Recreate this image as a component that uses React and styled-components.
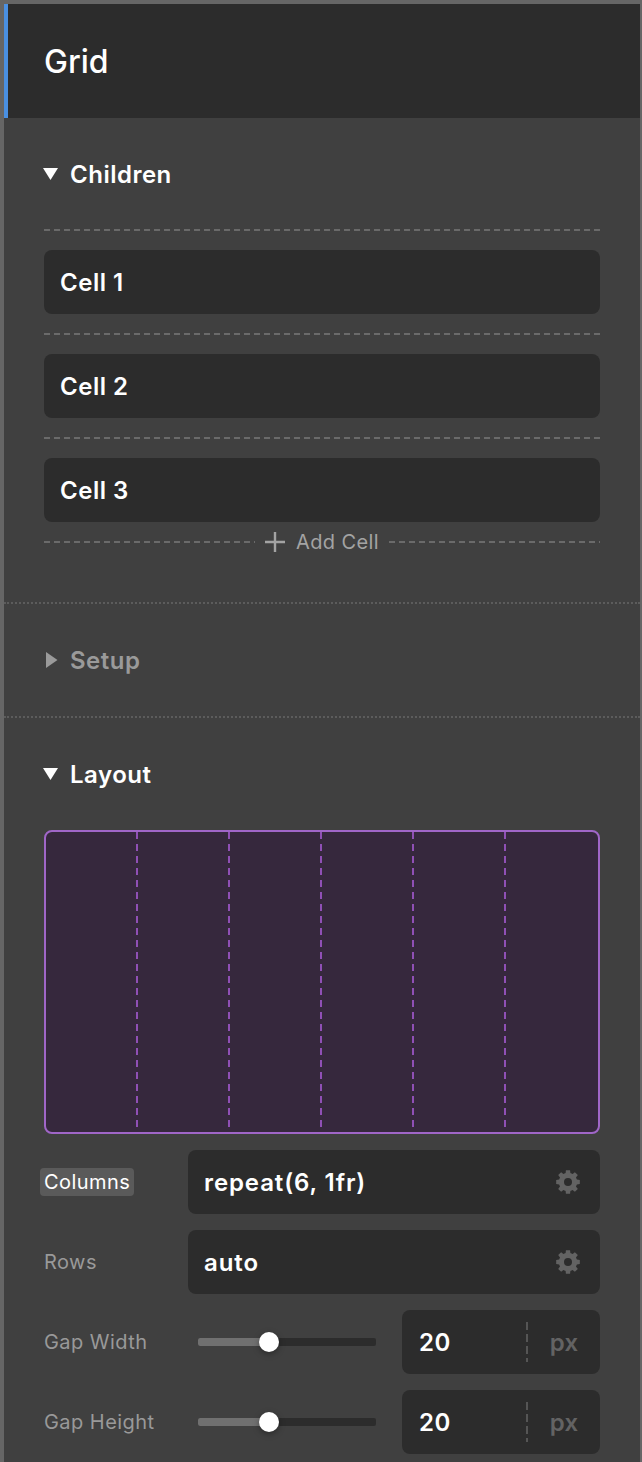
import React from "react";
import styled, { createGlobalStyle } from "styled-components";

const Global = createGlobalStyle`
  html, body { margin: 0; padding: 0; background: #666; }
  body { font-family: Inter, "Liberation Sans", sans-serif; -webkit-font-smoothing: antialiased; }
  * { box-sizing: border-box; }
`;
const Page = styled.div`
  width: 642px; height: 1462px; overflow: hidden; background: #666;
  padding: 4px 2px 0 4px;
`;
const Panel = styled.div`
  background: #404040; height: 1458px;
`;
const Header = styled.div`
  height: 114px; background: #2c2c2c; border-left: 4px solid #4a90e2;
  padding-left: 36px; display: flex; align-items: center;
  color: #fff; font-size: 32px; font-weight: 500;
`;
const Section = styled.section`
  padding: 0 40px ${p => p.$pb || 0}px;
  border-bottom: ${p => (p.$divider ? "2px dotted #5c5c5c" : "none")};
`;
const SectionHead = styled.div`
  height: 40px; margin: 36px 0 ${p => p.$mb}px; display: flex; align-items: center;
  font-size: 24px; font-weight: 600; letter-spacing: 0.5px;
  color: ${p => (p.$muted ? "#9a9a9a" : "#fff")};
`;
const CaretBox = styled.div`
  width: 26px; flex: none; display: flex; align-items: center;
`;
const Caret = styled.svg`
  display: block; fill: currentColor;
`;
const DashLine = styled.div`
  height: 2px; flex: 1;
  background: repeating-linear-gradient(90deg, #6a6a6a 0 6px, transparent 6px 10px);
`;
const Slot = styled.div`
  height: 40px; display: flex; align-items: center;
`;
const Cell = styled.div`
  height: 64px; background: #2c2c2c; border-radius: 8px; padding-left: 16px;
  display: flex; align-items: center;
  color: #fff; font-size: 24px; font-weight: 600; letter-spacing: 0.5px;
`;
const AddRow = styled.div`
  height: 40px; display: flex; align-items: center; color: #a3a3a3;
  font-size: 20px; letter-spacing: 0.4px;
`;
const AddLabel = styled.div`
  display: flex; align-items: center; gap: 11px; padding: 0 10px;
`;
const Preview = styled.div`
  height: 304px; background: #36283d; border: 2px solid #a066c8; border-radius: 8px;
  display: grid; grid-template-columns: repeat(6, 1fr); overflow: hidden;
`;
const Column = styled.div`
  background-image: ${p => p.$last ? "none" : "repeating-linear-gradient(180deg, #8f50b5 0 7px, transparent 7px 12px)"};
  background-size: 2px 100%; background-repeat: no-repeat; background-position: right top;
`;
const Rows = styled.div`
  display: flex; flex-direction: column; gap: 16px; margin-top: 16px;
`;
const Row = styled.div`
  height: 64px; display: flex; align-items: center;
`;
const Label = styled.div`
  width: 144px; flex: none; font-size: 20px; letter-spacing: 0.45px;
  color: ${p => (p.$active ? "#fff" : "#999")};
  span {
    display: inline-block; height: 28px; line-height: 29px; border-radius: 4px;
    ${p => p.$active ? "background:#5a5a5a; padding:0 4px; margin-left:-4px;" : ""}
  }
`;
const Field = styled.div`
  flex: 1; height: 64px; background: #2c2c2c; border-radius: 8px; padding: 0 20px 0 16px;
  display: flex; align-items: center; justify-content: space-between;
  color: #fff; font-size: 24px; font-weight: 600; letter-spacing: 0.9px;
`;
const Gear = styled.svg`
  width: 24px; height: 24px; fill: #636363; flex: none;
`;
const SliderBox = styled.div`
  width: 178px; margin-left: 10px; margin-right: 26px; height: 8px; border-radius: 2px;
  background: #2c2c2c; position: relative;
`;
const SliderFill = styled.div`
  height: 100%; border-radius: 2px 0 0 2px; background: #707070;
`;
const Knob = styled.div`
  position: absolute; top: 50%; width: 20px; height: 20px; margin: -10px 0 0 -10px;
  border-radius: 50%; background: #fff; box-shadow: 0 2px 6px rgba(0,0,0,.35);
`;
const NumBox = styled.div`
  width: 198px; flex: none; height: 64px; background: #2c2c2c; border-radius: 8px;
  display: flex; align-items: center; padding-left: 17px;
  color: #fff; font-size: 24px; font-weight: 600;
`;
const NumVal = styled.div`
  width: 109px; height: 40px; line-height: 42px; letter-spacing: 0.6px;
  background-image: repeating-linear-gradient(180deg, #555 0 8px, transparent 8px 12px);
  background-size: 2px 100%; background-repeat: no-repeat; background-position: right top;
`;
const Unit = styled.div`
  flex: 1; text-align: center; color: #636363; letter-spacing: 0.3px;
`;

const Down = () => (
  <CaretBox><Caret width="15" height="12" viewBox="0 0 15 12" style={{ marginLeft: -1 }}><path d="M0 0h15L7.5 12z" /></Caret></CaretBox>
);
const Right = () => (
  <CaretBox><Caret width="13" height="16" viewBox="0 0 13 16" style={{ marginLeft: 2 }}><path d="M0 0 11.5 8 0 16z" /></Caret></CaretBox>
);

const gearPath = (() => {
  const pt = (r, deg) => {
    const a = (deg * Math.PI) / 180;
    return `${(12 + r * Math.cos(a)).toFixed(2)} ${(12 + r * Math.sin(a)).toFixed(2)}`;
  };
  let d = "";
  for (let i = 0; i < 8; i++) {
    const c = i * 45 - 90;
    d += `${i ? "L" : "M"}${pt(9.2, c - 15)}L${pt(12, c - 10)}L${pt(12, c + 10)}L${pt(9.2, c + 15)}`;
  }
  return d + "ZM12 8a4 4 0 1 0 0 8 4 4 0 0 0 0-8z";
})();
const GearIcon = () => (
  <Gear viewBox="0 0 24 24"><path fillRule="evenodd" d={gearPath} /></Gear>
);
const Plus = styled.svg`width: 20px; height: 20px; stroke: #a3a3a3; stroke-width: 2.4; flex: none;`;

const cells = ["Cell 1", "Cell 2", "Cell 3"];

const Slider = ({ pct }) => (
  <SliderBox>
    <SliderFill style={{ width: `${pct}%` }} />
    <Knob style={{ left: `${pct}%` }} />
  </SliderBox>
);

export default function App() {
  return (
    <Page>
      <Global />
      <Panel>
        <Header>Grid</Header>
        <Section $divider $pb={40}>
          <SectionHead $mb={16}><Down />Children</SectionHead>
          {cells.map(c => (
            <React.Fragment key={c}>
              <Slot><DashLine /></Slot>
              <Cell>{c}</Cell>
            </React.Fragment>
          ))}
          <AddRow>
            <DashLine />
            <AddLabel>
              <Plus viewBox="0 0 20 20"><path d="M10 0v20M0 10h20" /></Plus>
              Add Cell
            </AddLabel>
            <DashLine />
          </AddRow>
        </Section>
        <Section $divider>
          <SectionHead $muted $mb={36}><Right />Setup</SectionHead>
        </Section>
        <Section>
          <SectionHead $mb={36}><Down />Layout</SectionHead>
          <Preview>
            {[0, 1, 2, 3, 4, 5].map(i => <Column key={i} $last={i === 5} />)}
          </Preview>
          <Rows>
            <Row><Label $active><span>Columns</span></Label><Field>repeat(6, 1fr)<GearIcon /></Field></Row>
            <Row><Label><span>Rows</span></Label><Field>auto<GearIcon /></Field></Row>
            <Row><Label><span>Gap Width</span></Label><Slider pct={40} /><NumBox><NumVal>20</NumVal><Unit>px</Unit></NumBox></Row>
            <Row><Label><span>Gap Height</span></Label><Slider pct={40} /><NumBox><NumVal>20</NumVal><Unit>px</Unit></NumBox></Row>
          </Rows>
        </Section>
      </Panel>
    </Page>
  );
}
